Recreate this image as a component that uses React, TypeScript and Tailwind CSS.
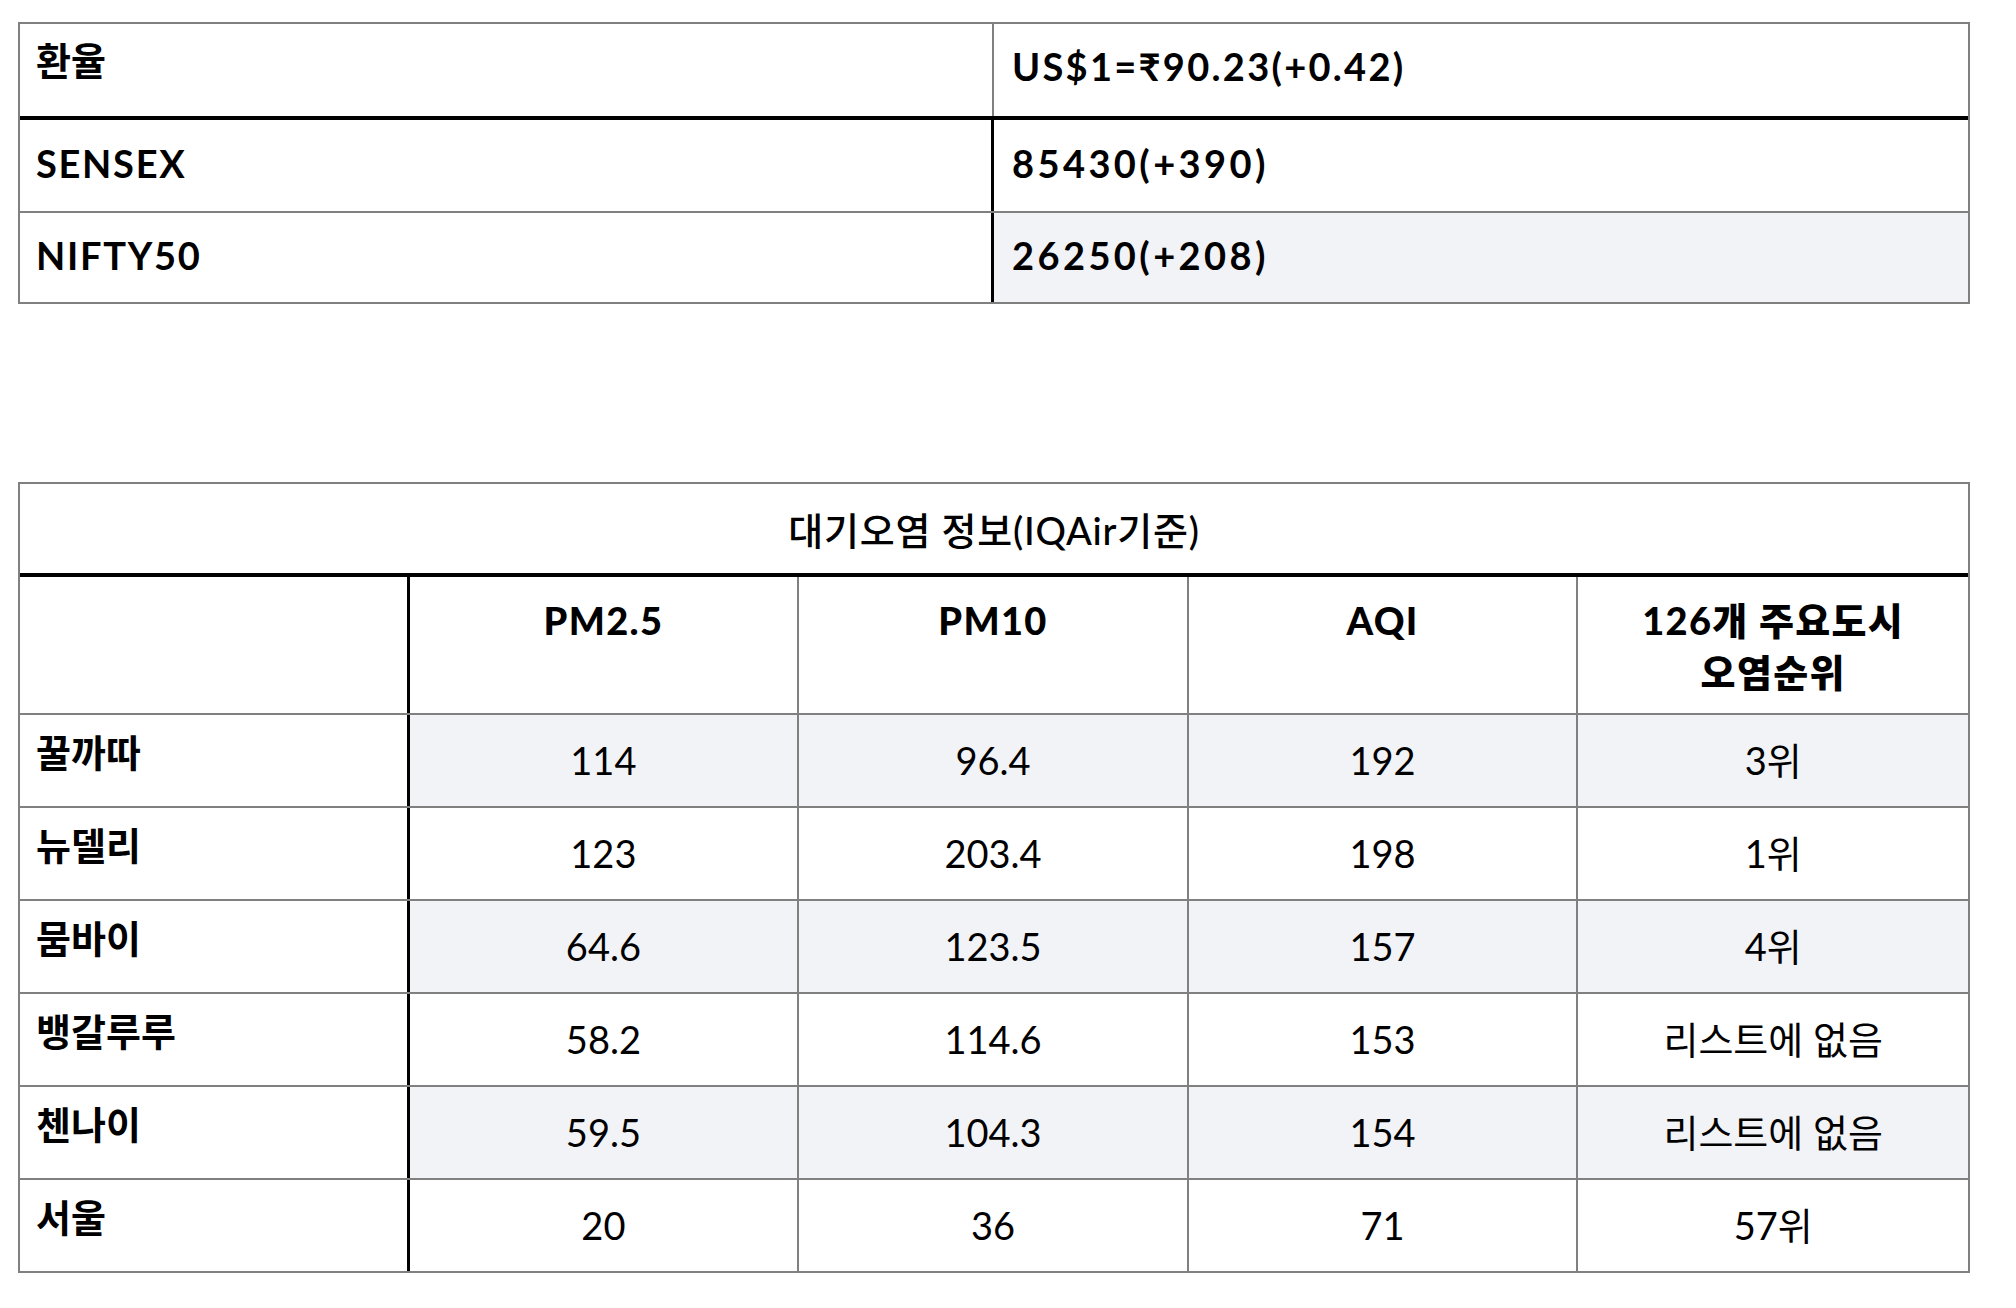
import React from "react";

const font = "font-['Lato','Noto_Sans_CJK_KR',sans-serif]";

const rates = [
  { label: "SENSEX", value: "85430(+390)" },
  { label: "NIFTY50", value: "26250(+208)", shaded: true },
];

const air = [
  { city: "꿀까따", pm25: "114", pm10: "96.4", aqi: "192", rank: "3위" },
  { city: "뉴델리", pm25: "123", pm10: "203.4", aqi: "198", rank: "1위" },
  { city: "뭄바이", pm25: "64.6", pm10: "123.5", aqi: "157", rank: "4위" },
  { city: "뱅갈루루", pm25: "58.2", pm10: "114.6", aqi: "153", rank: "리스트에 없음" },
  { city: "첸나이", pm25: "59.5", pm10: "104.3", aqi: "154", rank: "리스트에 없음" },
  { city: "서울", pm25: "20", pm10: "36", aqi: "71", rank: "57위" },
];

function RateTable() {
  return (
    <div className="w-[1952px] border-2 border-[#808080] text-[38px] font-bold tracking-[0.045em] text-black">
      <div className="grid h-[96px] grid-cols-2 border-b-4 border-black">
        <div className="flex items-center border-r-2 border-[#808080] px-4 pb-5 tracking-normal">환율</div>
        <div className="flex items-center pb-2 pl-[18px] tracking-[0.06em]">US$1=₹90.23(+0.42)</div>
      </div>
      {rates.map((r, i) => (
        <div
          key={r.label}
          className={`grid grid-cols-2 ${i === 0 ? "h-[93px] border-b-2 border-[#808080]" : "h-[89px]"}`}
        >
          <div className="flex items-center border-r-[3px] border-black px-4 pb-1">{r.label}</div>
          <div className={`flex items-center pb-1 pl-[18px] tracking-[0.09em] ${r.shaded ? "bg-[#f2f3f7]" : ""}`}>
            {r.value}
          </div>
        </div>
      ))}
    </div>
  );
}

function AirTable() {
  return (
    <div className="w-[1952px] border-2 border-[#808080] text-[38px] text-black">
      <div className="flex h-[93px] items-center justify-center border-b-4 border-black pt-1 font-medium tracking-[0.02em]">
        대기오염 정보(IQAir기준)
      </div>
      <div className="grid h-[138px] grid-cols-5 border-b-2 border-[#808080] font-black leading-[52px] tracking-[0.035em]">
        <div className="border-r-[3px] border-black" />
        <div className="border-r-2 border-[#808080] pt-[17px] text-center">PM2.5</div>
        <div className="border-r-2 border-[#808080] pt-[17px] text-center">PM10</div>
        <div className="border-r-2 border-[#808080] pt-[17px] text-center">AQI</div>
        <div className="pt-[17px] text-center">
          126개 주요도시
          <br />
          오염순위
        </div>
      </div>
      {air.map((row, i) => {
        const last = i === air.length - 1;
        const shade = i % 2 === 0 ? "bg-[#f2f3f7]" : "";
        return (
          <div
            key={row.city}
            className={`grid grid-cols-5 ${last ? "h-[91px]" : "h-[93px] border-b-2 border-[#808080]"}`}
          >
            <div className="flex items-center border-r-[3px] border-black px-4 pb-4 font-bold">{row.city}</div>
            <div className={`flex items-center justify-center border-r-2 border-[#808080] ${shade}`}>{row.pm25}</div>
            <div className={`flex items-center justify-center border-r-2 border-[#808080] ${shade}`}>{row.pm10}</div>
            <div className={`flex items-center justify-center border-r-2 border-[#808080] ${shade}`}>{row.aqi}</div>
            <div className={`flex items-center justify-center ${shade}`}>{row.rank}</div>
          </div>
        );
      })}
    </div>
  );
}

export default function App() {
  return (
    <div className={`min-h-[1308px] w-[2016px] bg-white pl-[18px] pt-[22px] ${font}`}>
      <RateTable />
      <div className="mt-[178px]">
        <AirTable />
      </div>
    </div>
  );
}
